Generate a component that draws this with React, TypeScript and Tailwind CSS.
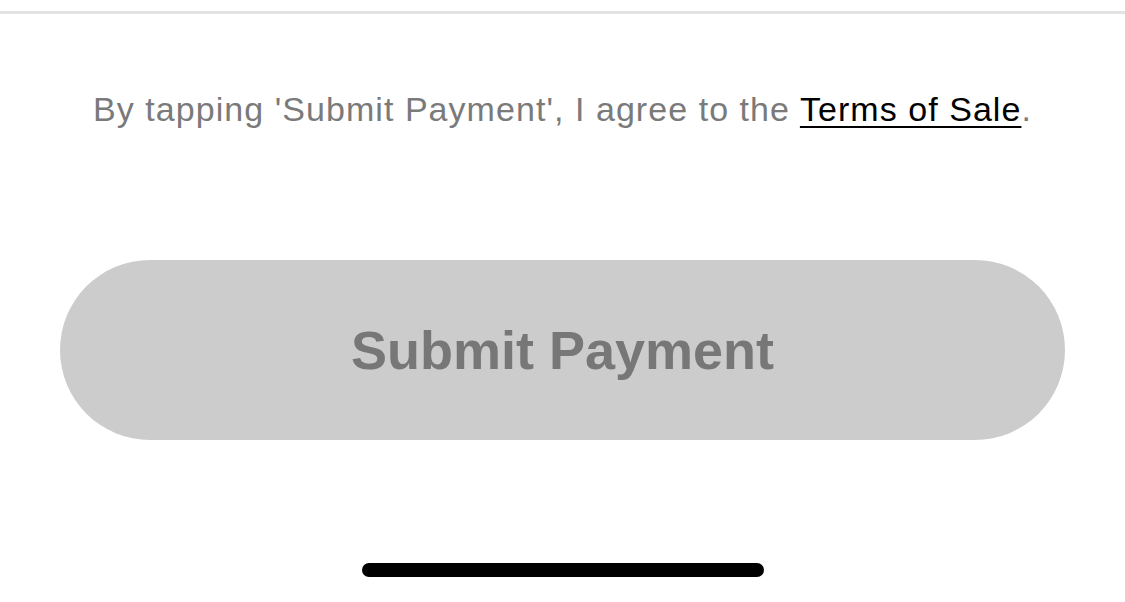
export default function App() {
  return (
    <div
      className="flex h-[602px] w-full flex-col bg-white"
      style={{ fontFamily: '"Liberation Sans", Arial, sans-serif' }}
    >
      {/* hairline under the sheet header */}
      <div className="mt-[11px] h-[3px] w-full bg-[#e3e3e3]" />

      <p className="mt-[75px] text-center text-[34px] leading-[40px] tracking-[1.05px] text-[#7a7a7a]">
        By tapping 'Submit Payment', I agree to the{" "}
        <a href="#" className="text-black underline decoration-2 underline-offset-[5px]">
          Terms of Sale
        </a>
        .
      </p>

      <button
        disabled
        className="mx-[60px] mt-[131px] flex h-[180px] items-center justify-center rounded-full bg-[#cccccc] text-[54px] font-bold text-[#777777]"
      >
        Submit Payment
      </button>

      {/* home indicator */}
      <div className="mt-[123px] flex justify-center">
        <div className="h-[14px] w-[402px] rounded-full bg-black" />
      </div>
    </div>
  );
}
